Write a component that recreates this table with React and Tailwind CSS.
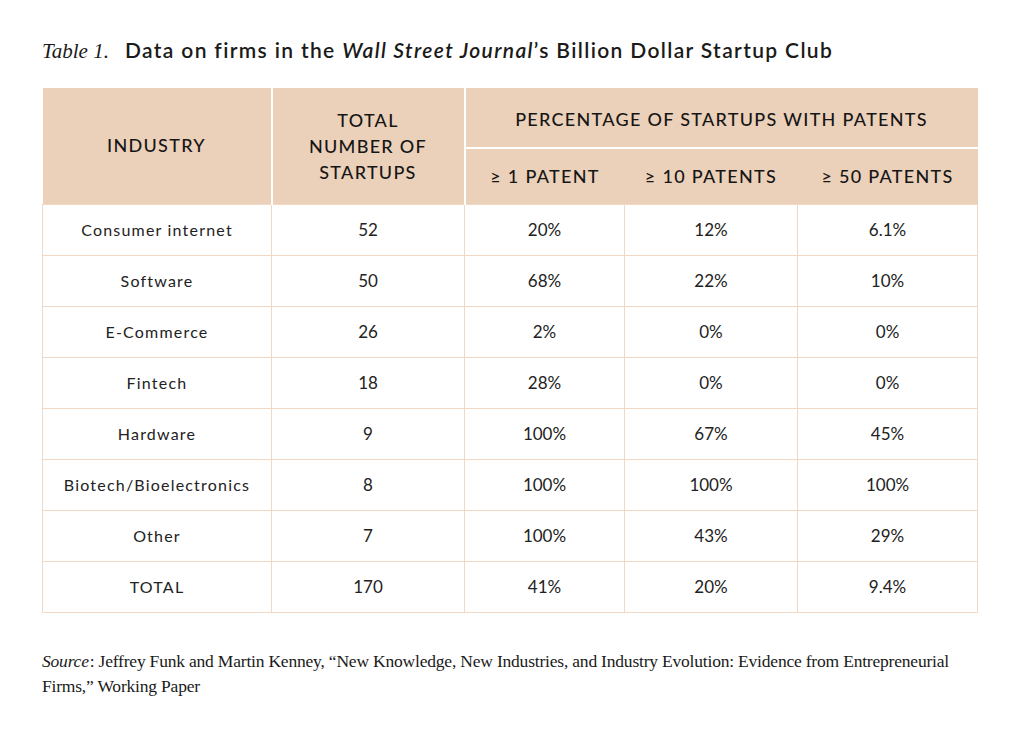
import React from "react";

const rows = [
  ["Consumer internet", "52", "20%", "12%", "6.1%"],
  ["Software", "50", "68%", "22%", "10%"],
  ["E-Commerce", "26", "2%", "0%", "0%"],
  ["Fintech", "18", "28%", "0%", "0%"],
  ["Hardware", "9", "100%", "67%", "45%"],
  ["Biotech/Bioelectronics", "8", "100%", "100%", "100%"],
  ["Other", "7", "100%", "43%", "29%"],
  ["TOTAL", "170", "41%", "20%", "9.4%"],
];

export default function App() {
  return (
    <div className="w-[1022px] h-[756px] bg-white pt-[34px] pl-[42px] text-[#1a1a1a]">
      {/* title */}
      <h1 className="flex items-baseline h-[34px]">
        <span className="font-['Liberation_Serif',serif] italic text-[21px] w-[83px]">
          Table 1.
        </span>
        <span className="font-['Lato',sans-serif] font-semibold text-[21px] tracking-[1.35px]">
          Data on firms in the <i>Wall Street Journal</i>’s Billion Dollar Startup Club
        </span>
      </h1>

      <table className="mt-[20px] w-[935px] table-fixed border-collapse font-['Lato',sans-serif]">
        <colgroup>
          <col className="w-[229px]" />
          <col className="w-[193px]" />
          <col className="w-[160px]" />
          <col className="w-[173px]" />
          <col className="w-[180px]" />
        </colgroup>
        <thead className="bg-[#ecd1ba] text-[18px] uppercase tracking-[1.3px] text-[#161616]">
          <tr className="h-[60px]">
            <th rowSpan={2} className="border-r-2 border-white font-medium">
              Industry
            </th>
            <th rowSpan={2} className="border-r-2 border-white font-medium leading-[26px] px-6">
              Total number of startups
            </th>
            <th colSpan={3} className="border-b-2 border-white font-medium pt-[4px]">
              Percentage of startups with patents
            </th>
          </tr>
          <tr className="h-[56px]">
            <th className="font-medium">≥ 1 Patent</th>
            <th className="font-medium">≥ 10 Patents</th>
            <th className="font-medium">≥ 50 Patents</th>
          </tr>
        </thead>
        <tbody className="text-[#222]">
          {rows.map((r) => (
            <tr key={r[0]} className="h-[51px]">
              {r.map((c, i) => (
                <td
                  key={i}
                  className={`border border-[#f1d9c5] text-center ${
                    i === 0 ? "text-[16px] tracking-[1.2px]" : "text-[17px]"
                  }`}
                >
                  {c}
                </td>
              ))}
            </tr>
          ))}
        </tbody>
      </table>

      <p className="mt-[36px] w-[932px] font-['Liberation_Serif',serif] text-[17.5px] leading-[25px] tracking-[-0.2px]">
        <i className="pr-[1px]">Source</i>: Jeffrey Funk and Martin Kenney, “New Knowledge, New Industries, and Industry Evolution: Evidence from Entrepreneurial Firms,” Working Paper
      </p>
    </div>
  );
}
